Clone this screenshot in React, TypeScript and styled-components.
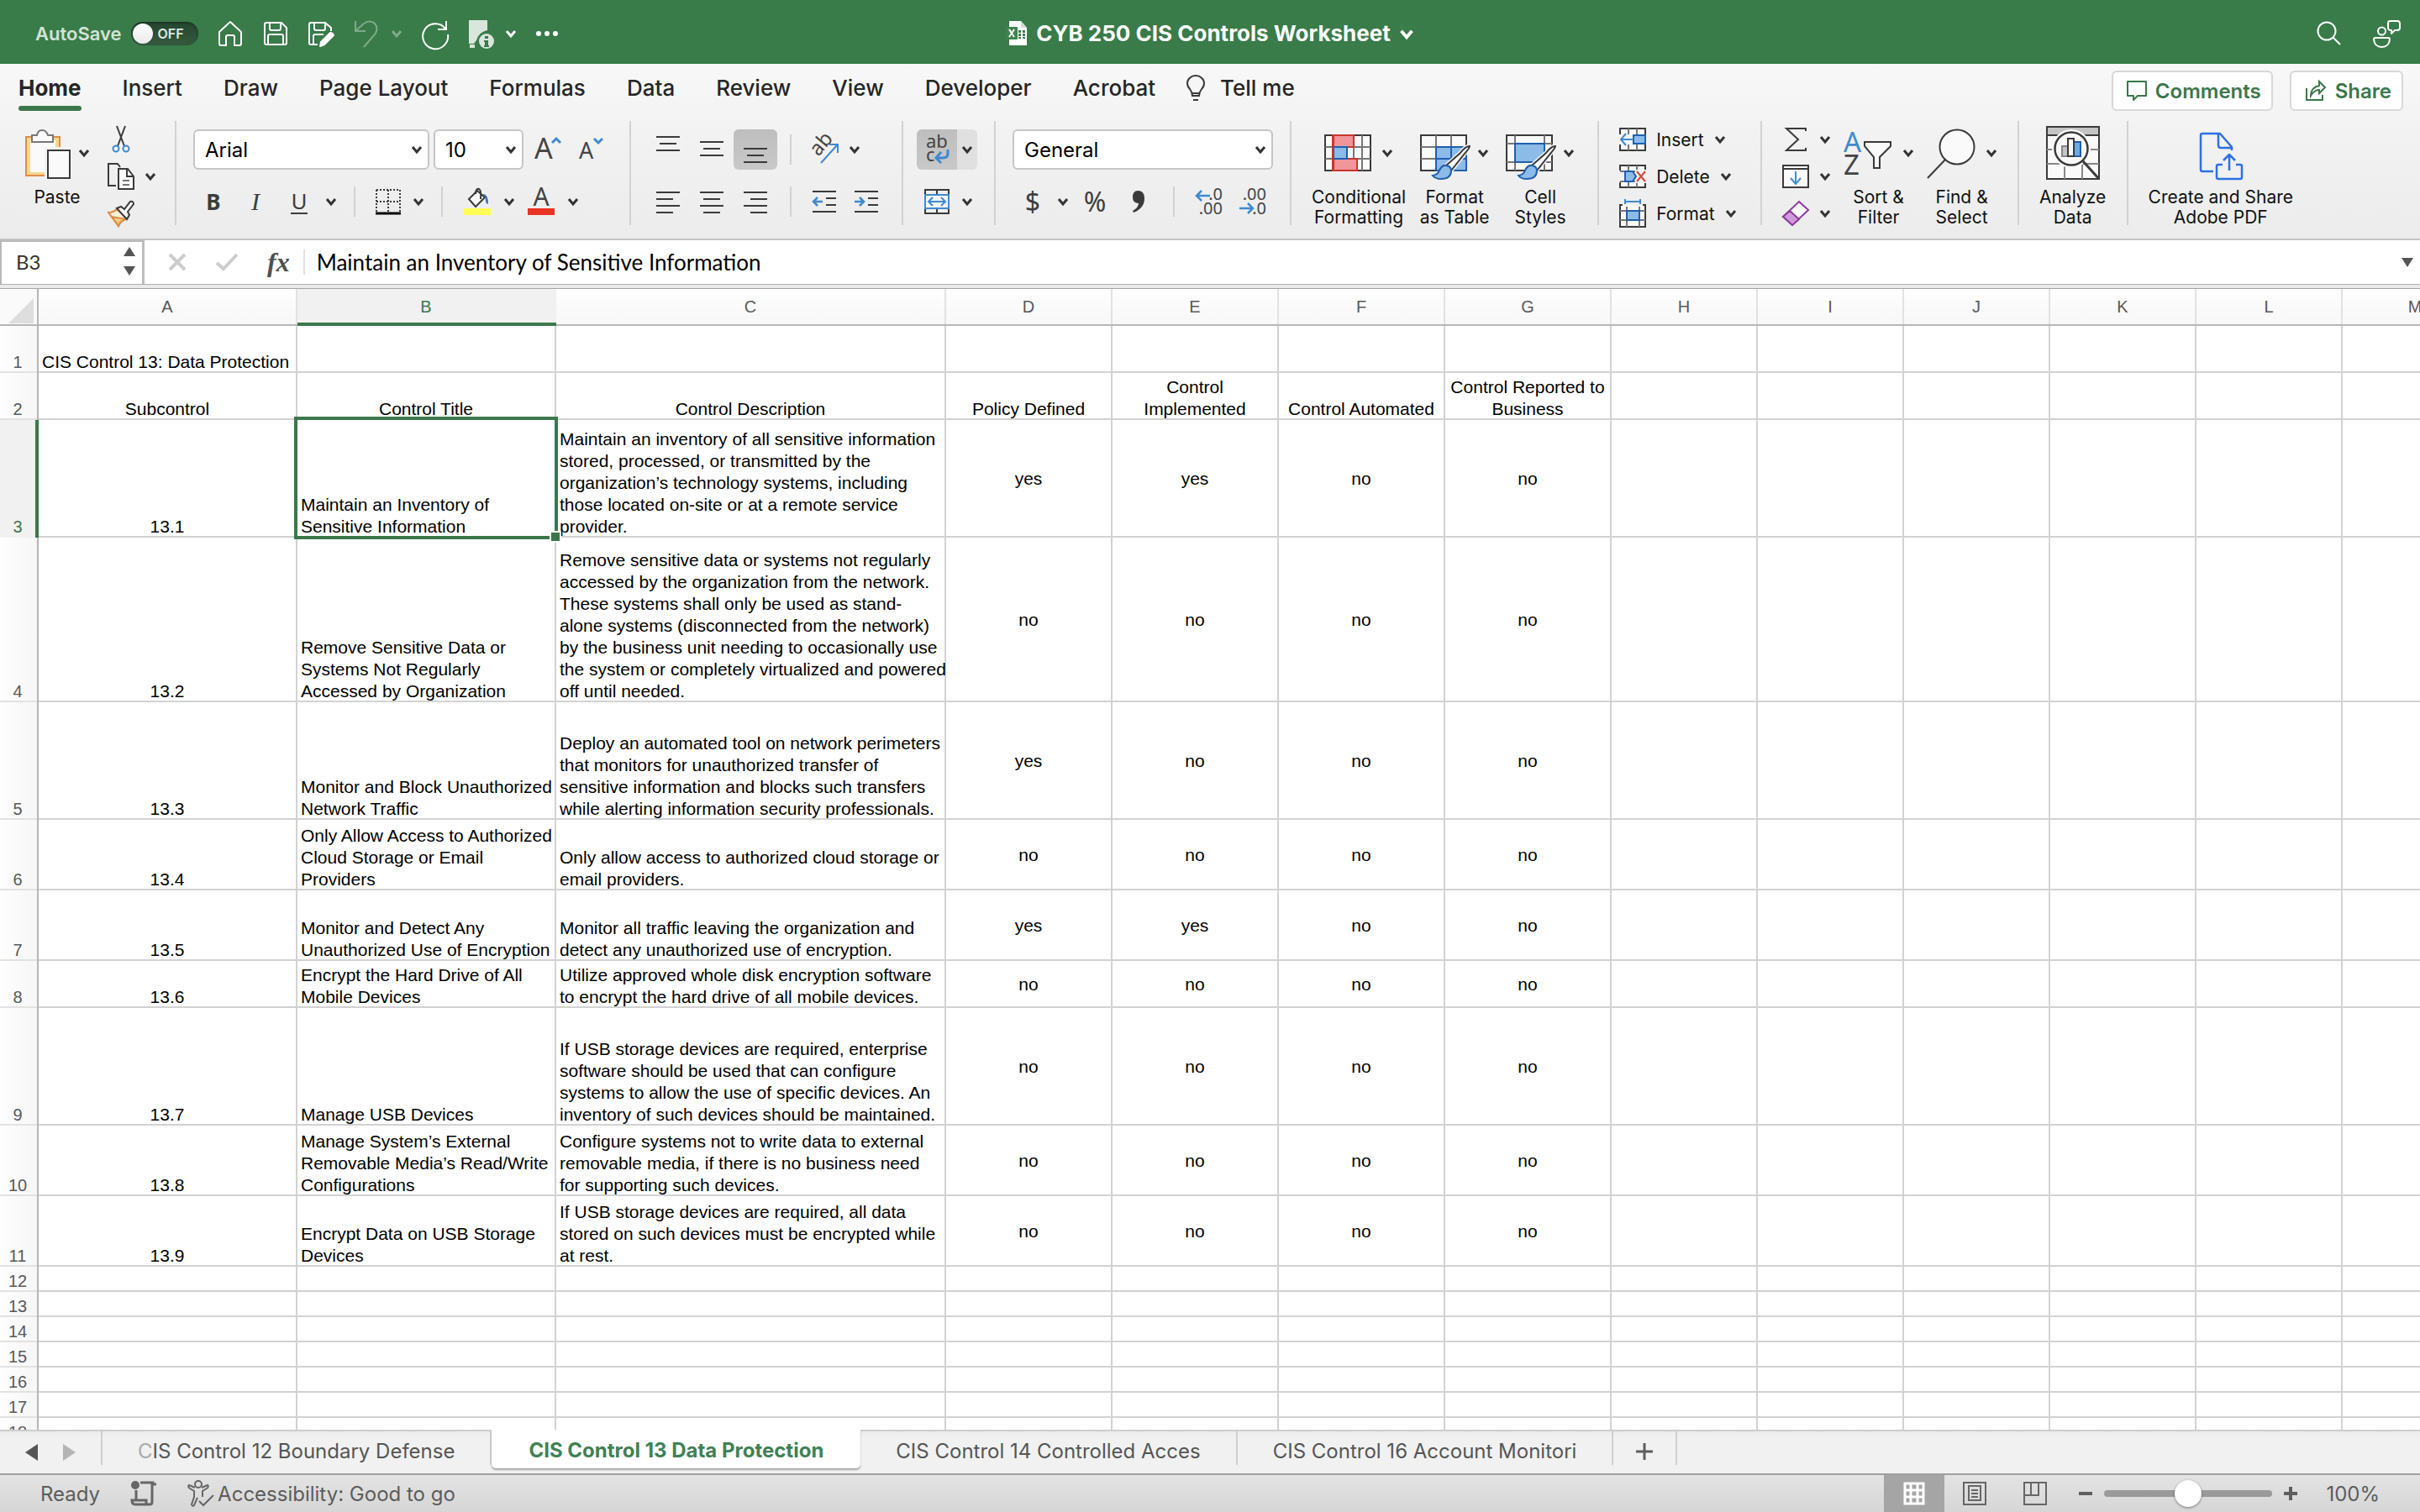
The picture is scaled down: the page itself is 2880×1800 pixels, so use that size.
import React from "react";
import styled, { createGlobalStyle, css } from "styled-components";

const UI = `Inter, "Noto Sans", sans-serif`;
const SHEET = `"Liberation Sans", Arial, sans-serif`;
const GREEN = "#3b774b";
const INK = "#3a3a3a";
const BLUE = "#3f8ad0";

const Global = createGlobalStyle`
  *, *::before, *::after { box-sizing: border-box; }
  body { margin: 0; font-family: ${UI}; background: #fff; }
  button, input, select { font: inherit; color: inherit; margin: 0; }
  svg { display: block; flex: none; overflow: visible; }
`;

/* ---------- shared parts ---------- */

const Page = styled.div`
  display: flex;
  flex-direction: column;
  height: 100vh;
  overflow: hidden;
`;

const PlainButton = styled.button`
  display: flex;
  align-items: center;
  justify-content: center;
  border: 0;
  padding: 0;
  background: none;
  cursor: pointer;
`;

const Row = styled.div<{ $gap?: number }>`
  display: flex;
  align-items: center;
  gap: ${(p) => p.$gap ?? 0}px;
`;

const Chevron = ({ color = "#333" }: { color?: string }) => (
  <svg width="14" height="10" viewBox="0 0 14 10" fill="none" stroke={color} strokeWidth="3">
    <path d="M2 2l5 6 5-6" />
  </svg>
);

/* ---------- title bar ---------- */

const TitleBar = styled.header`
  display: grid;
  grid-template-columns: 1fr auto 1fr;
  align-items: center;
  flex: none;
  height: 76px;
  padding: 4px 24px 0;
  background: #397b49;
  color: #fff;
`;

const QuickAccess = styled.div`
  display: flex;
  align-items: center;
  gap: 22px;
  padding-left: 18px;
`;

const AutoSave = styled.label`
  display: flex;
  align-items: center;
  gap: 11px;
  font-size: 22px;
  font-weight: 600;
  color: #d3e3d6;
`;

const Toggle = styled.span`
  display: grid;
  align-items: center;
  width: 80px;
  height: 28px;
  input,
  span {
    grid-area: 1 / 1;
  }
  input {
    appearance: none;
    width: 80px;
    height: 28px;
    border-radius: 14px;
    background: linear-gradient(#24452e, #35593e);
    box-shadow: inset 0 1px 3px rgba(0, 0, 0, 0.4);
  }
  input::before {
    content: "";
    display: block;
    width: 24px;
    height: 24px;
    margin: 2px;
    border-radius: 50%;
    background: linear-gradient(#fff, #eaeaea);
  }
  span {
    padding-left: 32px;
    font-size: 16px;
    line-height: 20px;
    color: #dfe8e1;
  }
`;

const BarIcon = styled(PlainButton)<{ $w?: number }>`
  width: ${(p) => p.$w ?? 32}px;
  height: 36px;
`;

const DocTitle = styled(PlainButton)`
  gap: 10px;
  font-size: 26px;
  line-height: 32px;
  font-weight: 700;
  color: #fff;
  svg:last-child {
    width: 18px;
    height: 13px;
  }
`;

const TitleActions = styled.div`
  display: flex;
  justify-content: flex-end;
  gap: 36px;
`;

const stroke = { fill: "none", stroke: "#fff", strokeWidth: 2 } as const;

const HomeIcon = () => (
  <svg width="32" height="32" viewBox="0 0 32 32" {...stroke} strokeLinejoin="round">
    <path d="M3 14L16 2l13 12v14q0 2-2 2h-6V20q0-2-2-2h-6q-2 0-2 2v10H5q-2 0-2-2z" />
  </svg>
);
const SaveIcon = () => (
  <svg width="32" height="32" viewBox="0 0 32 32" {...stroke} strokeLinejoin="round">
    <path d="M5 3h18l6 6v18q0 2-2 2H5q-2 0-2-2V5q0-2 2-2zM9 3v7q0 2 2 2h9q2 0 2-2V3M7 29V19q0-2 2-2h14q2 0 2 2v10" />
  </svg>
);
const SaveEditIcon = () => (
  <svg width="32" height="32" viewBox="0 0 32 32" {...stroke} strokeLinejoin="round">
    <path d="M12 29H4q-2 0-2-2V5q0-2 2-2h17l7 6v4M8 3v7q0 2 2 2h9q2 0 2-2V3M7 29V19q0-2 2-2h10" />
    <path d="M16 26l11-11q3 0 4 3L20 29l-5 2z" fill="#fff" />
  </svg>
);
const UndoIcon = () => (
  <svg width="32" height="34" viewBox="0 0 32 34" fill="none" stroke="#7fab88" strokeWidth="2">
    <path d="M3 2v12h12M4 13L13 5q7-5 13 0 5 6 0 13L13 33" />
  </svg>
);
const RedoIcon = () => (
  <svg width="34" height="34" viewBox="0 0 34 34" {...stroke}>
    <path d="M30 2v10H20M29 11A15 15 0 1 0 32 18" />
  </svg>
);
const DocInfoIcon = () => (
  <svg width="32" height="36" viewBox="0 0 32 36" fill="#d9e6dc">
    <path d="M2 2h22v12q-10 2-13 12l-3 4H2zM3 31h6v4H3z" />
    <circle cx="23" cy="27" r="9" />
    <path d="M21 21h4v3h-4zM20 26h5v6h1v2h-6v-2h1v-4h-1z" fill="#397b49" />
  </svg>
);
const DotsIcon = () => (
  <svg width="26" height="8" viewBox="0 0 26 8" fill="#fff">
    <circle cx="3" cy="4" r="3" />
    <circle cx="13" cy="4" r="3" />
    <circle cx="23" cy="4" r="3" />
  </svg>
);
const WorkbookIcon = () => (
  <svg width="26" height="32" viewBox="0 0 26 32">
    <path d="M4 1h14l7 8v21H4z" fill="#fff" />
    <path d="M18 1v8h7z" fill="#cfdcd2" />
    <path d="M15 12h3v3h-3zM20 12h3v3h-3zM15 16h3v3h-3zM20 16h3v3h-3zM15 20h3v2h-3zM20 20h3v2h-3z" fill="#397b49" />
    <rect x="0" y="8" width="14" height="15" rx="1" fill="#3f8350" />
    <path d="M4 11l6 9M10 11l-6 9" stroke="#fff" strokeWidth="2" />
  </svg>
);
const SearchIcon = () => (
  <svg width="32" height="32" viewBox="0 0 32 32" {...stroke}>
    <circle cx="13" cy="13" r="10.5" />
    <path d="M20 20l9 9" />
  </svg>
);
const PeopleIcon = () => (
  <svg width="34" height="34" viewBox="0 0 34 34" {...stroke} strokeLinejoin="round">
    <circle cx="11.500" cy="14" r="4.500" />
    <path d="M2 24q0-2 2-2h15q2 0 2 2-1 9-9.500 9T2 24zM21 2h9q3 0 3 3v5q0 3-3 3h-3l-4 4v-4q-4 0-4-3V5q0-3 2-3z" />
  </svg>
);

/* ---------- ribbon ---------- */

const Ribbon = styled.section`
  flex: none;
  background: linear-gradient(#f8f8f8, #f2f2f2 40%, #ececec);
  border-bottom: 2px solid #c4c4c4;
`;

const TabStrip = styled.nav`
  display: flex;
  align-items: flex-start;
  height: 68px;
  padding: 8px 20px 0 22px;
  gap: 49px;
`;

const RibbonTab = styled(PlainButton)<{ $active?: boolean }>`
  flex-direction: column;
  height: 48px;
  padding-top: 6px;
  justify-content: space-between;
  align-items: stretch;
  font-size: 26px;
  line-height: 30px;
  font-weight: ${(p) => (p.$active ? 700 : 500)};
  color: #262626;
  &::after {
    content: "";
    height: 6px;
    border-radius: 3px;
    background: ${(p) => (p.$active ? GREEN : "transparent")};
  }
`;

const TellMe = styled(PlainButton)`
  gap: 18px;
  height: 42px;
  margin-left: -12px;
  font-size: 26px;
  line-height: 30px;
  font-weight: 500;
  color: #262626;
`;

const TabActions = styled.div`
  display: flex;
  gap: 20px;
  margin-left: auto;
`;

const ActionButton = styled.button`
  display: flex;
  align-items: center;
  gap: 10px;
  height: 48px;
  padding: 0 12px 0 16px;
  border: 2px solid #d8d8d8;
  border-radius: 6px;
  background: #fff;
  color: ${GREEN};
  font-size: 24px;
  font-weight: 600;
`;

const Toolbar = styled.div`
  display: flex;
  align-items: flex-start;
  height: 140px;
`;

const Group = styled.div<{ $pl?: number; $pr?: number; $gap?: number }>`
  display: flex;
  gap: ${(p) => p.$gap ?? 14}px;
  height: 128px;
  padding: 0 ${(p) => p.$pr ?? 18}px 0 ${(p) => p.$pl ?? 18}px;
`;

const Rule = styled.div`
  flex: none;
  width: 2px;
  height: 124px;
  background: #d2d2d2;
`;

const TwoRows = styled.div`
  display: grid;
  grid-template-rows: 48px 48px;
  align-content: start;
  gap: 14px;
  padding-top: 10px;
`;

const ThreeRows = styled.div`
  display: grid;
  grid-template-rows: repeat(3, 44px);
  align-content: start;
  justify-items: start;
`;

const Tool = styled(PlainButton)<{ $w?: number; $bg?: string; $radius?: string }>`
  flex: none;
  width: ${(p) => p.$w ?? 52}px;
  height: 48px;
  background: ${(p) => p.$bg ?? "none"};
  border-radius: ${(p) => p.$radius ?? "0"};
`;

const MiniRule = styled.div<{ $w?: number }>`
  flex: none;
  width: ${(p) => p.$w ?? 32}px;
  display: flex;
  justify-content: center;
  &::before {
    content: "";
    width: 2px;
    height: 36px;
    background: #d2d2d2;
  }
`;

const SelectBox = styled.div<{ $w: number }>`
  display: grid;
  align-items: center;
  width: ${(p) => p.$w}px;
  height: 48px;
  select {
    grid-area: 1 / 1;
    width: 100%;
    height: 48px;
    appearance: none;
    padding: 0 30px 0 12px;
    border: 2px solid #c6c6c6;
    border-radius: 6px;
    background: #fff;
    color: #000;
    font-size: 24px;
  }
  svg {
    grid-area: 1 / 1;
    justify-self: end;
    margin-right: 8px;
    pointer-events: none;
  }
`;

const Big = styled.button<{ $w?: number }>`
  display: flex;
  flex-direction: column;
  align-items: center;
  min-width: ${(p) => p.$w ?? 88}px;
  padding: 6px 0 0;
  border: 0;
  background: none;
  color: #111;
  font-size: 21px;
  line-height: 24px;
  text-align: center;
  white-space: pre;
`;

const BigIcon = styled.span<{ $gap?: number }>`
  display: flex;
  align-items: center;
  gap: ${(p) => p.$gap ?? 8}px;
  height: 64px;
  margin-bottom: 9px;
`;

const Small = styled(PlainButton)`
  gap: 12px;
  height: 44px;
  font-size: 21px;
  color: #111;
`;

const glyph = { fontFamily: `"Noto Sans", sans-serif`, fill: "#444" } as const;

type Bar = [number, number];
const Bars = ({ rows, top = 0 }: { rows: Bar[]; top?: number }) => (
  <svg width="28" height="32" viewBox="0 0 28 32" fill={INK}>
    {rows.map(([x, w], i) => (
      <rect key={i} x={x} y={top + i * 8} width={w} height="2" />
    ))}
  </svg>
);
const three: Bar[] = [[0, 28], [4, 20], [0, 28]];

const IndentIcon = ({ inward }: { inward?: boolean }) => (
  <svg width="28" height="28" viewBox="0 0 28 28" fill={INK}>
    <path d="M0 1h28v2H0zM16 9h12v2H16zM16 17h12v2H16zM0 25h28v2H0z" />
    <path
      d={inward ? "M0 14h10M6 9l5 5-5 5" : "M12 14H2M6 9l-5 5 5 5"}
      fill="none"
      stroke={BLUE}
      strokeWidth="2.500"
    />
  </svg>
);

const Brush = () => (
  <g>
    <path d="M59 24q-5 0-11 8L31 47l6 6 16-20q6-7 6-9z" fill="#fff" stroke="#f5f5f5" strokeWidth="5" />
    <path d="M59 24q-5 0-11 8L31 47l6 6 16-20q6-7 6-9z" fill="#fff" stroke={INK} strokeWidth="2" />
    <path d="M37 53q0 10-12 10-7 0-10-4 6-1 8-6 3-7 8-6 6 1 6 6z" fill="#8dbbe8" stroke="#1f5fae" strokeWidth="2" />
  </g>
);

const PasteIcon = () => (
  <svg width="56" height="64" viewBox="0 0 56 64">
    <path d="M2 13h40v46H2z" fill="#f5d88f" stroke="#e28b45" strokeWidth="2" />
    <path d="M7 17h30v38H7z" fill="#fafafa" />
    <path d="M9 19v-8h6q1-6 6-6t7 6h6v8z" fill="#fafafa" stroke="#777" strokeWidth="2" />
    <path d="M24 25h32v39H24z" fill="#f3f3f3" />
    <path d="M28 29h26v33H28z" fill="#fafafa" stroke={INK} strokeWidth="2" />
  </svg>
);
const CutIcon = () => (
  <svg width="32" height="34" viewBox="0 0 32 34" fill="none">
    <path d="M11 1l9 24M21 1l-9 24" stroke={INK} strokeWidth="2" />
    <circle cx="10" cy="28" r="3.500" stroke={BLUE} strokeWidth="2" />
    <circle cx="22" cy="28" r="3.500" stroke={BLUE} strokeWidth="2" />
  </svg>
);
const CopyIcon = () => (
  <svg width="32" height="34" viewBox="0 0 32 34" fill="none" stroke={INK} strokeWidth="2">
    <path d="M10 28H1V2h11l3 4" />
    <path d="M13 8h11l7 9v15H13z" fill="#fafafa" />
    <path d="M23 8v9h8" />
    <path d="M18 22h8M18 27h8" stroke="#777" />
  </svg>
);
const PainterIcon = () => (
  <svg width="32" height="32" viewBox="0 0 32 32">
    <path d="M1 15q6 0 10-4l12 11q-7 2-10 9z" fill="#fdf0d8" stroke="#e28b45" strokeWidth="2" />
    <path d="M5 20l17 3q-7 2-9 8z" fill="#f5cf7f" stroke="#e28b45" strokeWidth="2" />
    <path d="M11 10l5-2 4 3 7-9q4-1 4 3l-7 9 2 4-3 5z" fill="#fafafa" stroke={INK} strokeWidth="2" />
  </svg>
);
const BordersIcon = () => (
  <svg width="32" height="32" viewBox="0 0 32 32" fill="none" stroke={INK} strokeWidth="2">
    <path d="M2 2h28M2 16h28M2 2v26M16 2v26M30 2v26" strokeDasharray="2 2" />
    <path d="M1 30h30" stroke="#000" strokeWidth="3" />
  </svg>
);
const FillIcon = () => (
  <svg width="32" height="34" viewBox="0 0 32 34">
    <path d="M6 14L16 4l9 8-11 11z" fill="#fafafa" stroke={INK} strokeWidth="2" />
    <path d="M14 8q0-7 4-6 3 1 2 12" fill="none" stroke={INK} strokeWidth="2" />
    <path d="M22 8q7-1 7 12-4-1-3-8z" fill="#2d6fc0" />
    <path d="M0 25h32v8H0z" fill="#fffe54" />
  </svg>
);
const FontColorIcon = () => (
  <svg width="32" height="34" viewBox="0 0 32 34">
    <text x="16" y="22" fontSize="30" textAnchor="middle" {...glyph}>A</text>
    <path d="M0 25h32v8H0z" fill="#e93323" />
  </svg>
);
const SizeIcon = ({ down }: { down?: boolean }) => (
  <svg width="32" height="36" viewBox="0 0 32 36">
    <text x="0" y="29" fontSize={down ? 27 : 34} {...glyph}>A</text>
    <path
      d={down ? "M18 5l5 5 5-5" : "M21 10l5-5 5 5"}
      fill="none"
      stroke={BLUE}
      strokeWidth="3"
    />
  </svg>
);
const OrientIcon = () => (
  <svg width="34" height="34" viewBox="0 0 34 34">
    <text x="0" y="0" fontSize="24" transform="translate(10 26) rotate(-50)" {...glyph}>ab</text>
    <path d="M13 33L32 12M23 11h10v10" fill="none" stroke={BLUE} strokeWidth="2" />
  </svg>
);
const WrapIcon = () => (
  <svg width="30" height="36" viewBox="0 0 30 36">
    <text x="2" y="16" fontSize="22" {...glyph}>ab</text>
    <text x="2" y="32" fontSize="22" {...glyph}>c</text>
    <path d="M28 18v5q0 5-6 5h-7M20 21l-6 7 6 6" fill="none" stroke={BLUE} strokeWidth="3" />
  </svg>
);
const MergeIcon = () => (
  <svg width="32" height="32" viewBox="0 0 32 32" fill="none" stroke={INK} strokeWidth="2">
    <path d="M2 2h28v28H2zM16 2v6M16 24v6" />
    <path d="M2 8h28v16H2z" fill="#f3f8fd" stroke={BLUE} />
    <path d="M7 16h18M11 11l-5 5 5 5M21 11l5 5-5 5" stroke={BLUE} />
  </svg>
);
const DecimalIcon = ({ more }: { more?: boolean }) => (
  <svg width="34" height="34" viewBox="0 0 34 34">
    <text x="33" y="15" fontSize="20" textAnchor="end" {...glyph}>{more ? ".0" : ".00"}</text>
    <text x="33" y="32" fontSize="20" textAnchor="end" {...glyph}>{more ? ".00" : ".0"}</text>
    <path
      d={more ? "M18 10H2M8 4l-6 6 6 6" : "M1 25h16M11 19l6 6-6 6"}
      fill="none"
      stroke={BLUE}
      strokeWidth="2.500"
    />
  </svg>
);
const ConditionalIcon = () => (
  <svg width="60" height="64" viewBox="0 0 60 64" strokeWidth="2">
    <path d="M1 11h54v42H1z" fill="#fafafa" stroke={INK} />
    <path d="M1 25h54M1 39h54M35 11v42M45 11v42" stroke="#777" />
    <path d="M11 11h24v14H11zM11 39h28v14H11z" fill="#f0959a" stroke="#c8372b" />
    <path d="M11 25h16v14H11z" fill="#8dbbe8" stroke="#1f5fae" />
    <path d="M10 10v44" stroke="#c8372b" />
  </svg>
);
const FormatTableIcon = () => (
  <svg width="60" height="64" viewBox="0 0 60 64" strokeWidth="2">
    <path d="M1 11h54v42H1z" fill="#fafafa" stroke={INK} />
    <path d="M1 25h54M1 39h54M19 11v42M37 11v42" stroke="#777" />
    <path d="M19 25h36v28H19zM19 39h36M37 25v28" fill="#8dbbe8" stroke="#1f5fae" />
    <Brush />
  </svg>
);
const CellStylesIcon = () => (
  <svg width="60" height="64" viewBox="0 0 60 64" strokeWidth="2">
    <path d="M1 11h54v42H1z" fill="#fafafa" stroke={INK} />
    <path d="M1 21h54M1 43h54M11 11v42M46 11v42" stroke="#777" />
    <path d="M11 21h35v22H11z" fill="#8dbbe8" stroke="#1f5fae" />
    <Brush />
  </svg>
);
const InsertIcon = () => (
  <svg width="32" height="28" viewBox="0 0 32 28" strokeWidth="2">
    <path d="M1 1h30v26H1z" fill="#fafafa" stroke={INK} />
    <path d="M11 1v26M21 1v26M1 9h30M1 19h30" stroke="#777" />
    <path d="M17 9h14v10H17z" fill="#8dbbe8" stroke="#1f5fae" />
    <path d="M0 8h16v12H0z" fill="#f5f5f5" />
    <path d="M17 14H2M8 7l-6 7 6 7" fill="none" stroke={BLUE} />
  </svg>
);
const DeleteIcon = () => (
  <svg width="32" height="28" viewBox="0 0 32 28" strokeWidth="2">
    <path d="M1 7V1h30v26H1v-6" fill="#fafafa" stroke={INK} />
    <path d="M11 1v26M21 1v26M1 8h30M1 20h30" stroke="#777" />
    <path d="M0 9h5v10H0zM19 6h13v16H19z" fill="#f3f3f3" />
    <path d="M7 8h9l4 6-4 6H7z" fill="#8dbbe8" stroke="#1f5fae" />
    <path d="M21 8l10 12M31 8L21 20" fill="none" stroke="#d9443a" />
  </svg>
);
const FormatIcon = () => (
  <svg width="32" height="34" viewBox="0 0 32 34" strokeWidth="2" fill="none">
    <path d="M4 7H1v26h30V7h-3" fill="#fafafa" stroke={INK} />
    <path d="M9 9v24M24 9v24M1 14h30M1 25h30" stroke="#777" />
    <path d="M9 14h15v11H9z" fill="#8dbbe8" stroke="#1f5fae" />
    <path d="M7 3h18M7 0v6M25 0v6" stroke={BLUE} />
  </svg>
);
const SumIcon = () => (
  <svg width="32" height="30" viewBox="0 0 32 30" fill="none" stroke={INK} strokeWidth="2">
    <path d="M28 5V2H5l14 13L5 28h23v-3" />
  </svg>
);
const FillDownIcon = () => (
  <svg width="32" height="28" viewBox="0 0 32 28" fill="#fafafa" stroke={INK} strokeWidth="2">
    <path d="M1 1h30v26H1zM1 5h30" />
    <path d="M16 8v14M10 16l6 7 6-7" fill="none" stroke={BLUE} />
  </svg>
);
const ClearIcon = () => (
  <svg width="32" height="32" viewBox="0 0 32 32" stroke="#8e3a9d" strokeWidth="2">
    <path d="M20 2l11 10-19 18L1 20z" fill="#fafafa" />
    <path d="M9 13l11 10-8 7L1 20z" fill="#cf9bd8" />
  </svg>
);
const SortIcon = () => (
  <svg width="58" height="64" viewBox="0 0 58 64">
    <text x="0" y="31" fontSize="33" {...glyph} fill={BLUE}>A</text>
    <text x="0" y="58" fontSize="33" {...glyph}>Z</text>
    <path d="M25 19h31v5L43 37v13h-7V37L25 24z" fill="#fafafa" stroke={INK} strokeWidth="2" />
  </svg>
);
const FindIcon = () => (
  <svg width="58" height="64" viewBox="0 0 58 64" fill="#fafafa" stroke={INK} strokeWidth="2">
    <circle cx="36" cy="25" r="20.500" />
    <path d="M22 40L1 62" />
  </svg>
);
const AnalyzeIcon = () => (
  <svg width="64" height="64" viewBox="0 0 64 64" strokeWidth="2">
    <path d="M1 1h62v62H1z" fill="#fafafa" stroke={INK} strokeWidth="2" />
    <path d="M2 2h60v8H2z" fill="#c4c4c4" />
    <path d="M1 11h62" stroke={INK} />
    <path d="M1 28h62M1 45h62M22 45v18M43 45v18" stroke="#888" />
    <circle cx="30" cy="27" r="23" fill="#fafafa" />
    <circle cx="30" cy="27" r="19.500" fill="#fafafa" stroke={INK} strokeWidth="2.500" />
    <path d="M19 24h7v12h-7z" fill="#c4c4c4" stroke="#888" />
    <path d="M33 19h8v17h-8z" fill="#6fa8e0" stroke="#1f5fae" />
    <path d="M26 15h7v21h-7z" fill="#fff" stroke={INK} />
    <path d="M44 42l19 21" stroke={INK} strokeWidth="3" />
  </svg>
);
const PdfIcon = () => (
  <svg width="52" height="64" viewBox="0 0 52 64" fill="none" stroke="#2f6fe4" strokeWidth="2.500" strokeLinejoin="round">
    <path d="M17 54H4q-2 0-2-2V11q0-2 2-2h21l14 16v4M23 10v13q0 3 3 3h12" />
    <path d="M28 46h-5q-2 0-2 2v13q0 2 2 2h26q2 0 2-2V48q0-2-2-2h-5M36 53V35M29 41l7-7 7 7" />
  </svg>
);
const BulbIcon = () => (
  <svg width="22" height="32" viewBox="0 0 22 32" fill="none" stroke={INK} strokeWidth="2">
    <path d="M7 25q0-4-3-8-3-3-3-7a10 9 0 0 1 20 0q0 4-3 7-3 4-3 8zM7 22h8M8 30h6" />
  </svg>
);
const CommentIcon = () => (
  <svg width="24" height="26" viewBox="0 0 24 26" fill="none" stroke={GREEN} strokeWidth="2">
    <path d="M1 2h22v17H13l-5 5v-5H1z" strokeLinejoin="round" />
  </svg>
);
const ShareIcon = () => (
  <svg width="26" height="26" viewBox="0 0 26 26" fill="none" stroke={GREEN} strokeWidth="2">
    <path d="M2 10v14h19v-6M7 19q0-10 10-12V2l7 7-7 7v-4q-6 0-10 7z" />
  </svg>
);

const Mark = styled.span<{ $kind?: "b" | "i" | "u" | "sym" }>`
  font-family: "Noto Sans", sans-serif;
  font-size: 26px;
  line-height: 32px;
  color: #3d3d3d;
  ${(p) => p.$kind === "b" && css`font-weight: 700;`}
  ${(p) => p.$kind === "i" && css`font-family: "Liberation Serif", serif; font-style: italic; font-size: 30px;`}
  ${(p) => p.$kind === "u" && css`border-bottom: 2px solid #3d3d3d; line-height: 28px;`}
  ${(p) => p.$kind === "sym" && css`font-size: 32px;`}
`;

/* ---------- formula bar ---------- */

const FormulaBar = styled.div`
  display: flex;
  align-items: stretch;
  flex: none;
  height: 58px;
  background: #fff;
  border-bottom: 1px solid #a4a4a4;
  box-shadow: inset 0 -4px 0 #e9e9e9, inset 0 -5px 0 #b0b0b0;
  padding-bottom: 5px;
  font-family: Lato, "Open Sans", sans-serif;
  font-size: 26px;
`;

const NameBox = styled.div`
  display: flex;
  align-items: center;
  width: 172px;
  border: 2px solid #b9b9b9;
  border-bottom: 0;
  border-right: 3px solid #bdbdbd;
  padding: 0 8px 4px 17px;
  input {
    flex: 1;
    min-width: 0;
    border: 0;
    padding: 0;
    background: none;
    color: #333;
    font-size: 24px;
  }
`;

const Stepper = styled.div`
  display: flex;
  flex-direction: column;
  gap: 12px;
`;

const FormulaActions = styled.div`
  display: flex;
  align-items: center;
  gap: 34px;
  padding: 0 16px 0 28px;
`;

const Fx = styled.span`
  font-family: "Liberation Serif", serif;
  font-style: italic;
  font-weight: 700;
  font-size: 32px;
  line-height: 36px;
  color: #505050;
`;

const FormulaInput = styled.input`
  flex: 1;
  align-self: center;
  height: 30px;
  min-width: 0;
  border: 0;
  border-left: 2px solid #e2e2e2;
  padding: 0 0 0 14px;
  background: none;
  color: #000;
`;

const Expand = styled(PlainButton)`
  width: 30px;
`;

const Triangle = ({ up, color = "#555" }: { up?: boolean; color?: string }) => (
  <svg width="14" height="11" viewBox="0 0 14 11" fill={color}>
    <path d={up ? "M7 0l7 11H0z" : "M7 11L0 0h14z"} />
  </svg>
);

/* ---------- sheet ---------- */

const SheetArea = styled.main`
  flex: 1;
  min-height: 0;
  overflow: hidden;
`;

const Grid = styled.table`
  table-layout: fixed;
  width: 2962px;
  border-spacing: 0;
  font-family: ${SHEET};
  font-size: 21px;
  line-height: 26px;
  color: #000;
`;

const Corner = styled.td`
  height: 44px;
  padding: 8px 4px 0 10px;
  background: #fafafa;
  box-shadow: inset -2px -2px 0 #b6b6b6;
`;

const ColHead = styled.th<{ $on?: boolean }>`
  height: 44px;
  padding: 0 2px 2px 0;
  font-size: 20px;
  font-weight: 400;
  color: ${(p) => (p.$on ? GREEN : "#595959")};
  background: ${(p) => (p.$on ? "#f1f1f1" : "linear-gradient(#fefefe, #f7f7f7)")};
  box-shadow: ${(p) =>
    p.$on ? `inset 0 -4px 0 ${GREEN}` : "inset 0 -2px 0 #b6b6b6, inset -2px 0 0 #e2e2e2"};
`;

const RowHead = styled.th<{ $on?: boolean }>`
  padding: 0 4px 0 0;
  vertical-align: bottom;
  font-size: 20px;
  font-weight: 400;
  color: ${(p) => (p.$on ? GREEN : "#595959")};
  background: ${(p) => (p.$on ? "#f1f1f1" : "linear-gradient(90deg, #fefefe, #f6f6f6)")};
  box-shadow: ${(p) =>
    p.$on ? `inset -4px 0 0 ${GREEN}` : "inset -2px 0 0 #b6b6b6, inset 0 -2px 0 #e2e2e2"};
`;

const Line = styled.tr<{ $h: number }>`
  height: ${(p) => p.$h}px;
`;

const Cell = styled.td<{ $align?: string; $middle?: boolean }>`
  position: relative;
  padding: 0 6px 0 4px;
  text-align: ${(p) => p.$align ?? "left"};
  vertical-align: ${(p) => (p.$middle ? "middle" : "bottom")};
  white-space: pre;
  box-shadow: inset -2px -2px 0 #d2d2d2;
`;

const Selection = styled.div`
  position: absolute;
  inset: -4px -2px -2px -4px;
  z-index: 1;
  border: 4px solid ${GREEN};
  pointer-events: none;
  &::after {
    content: "";
    position: absolute;
    right: -8px;
    bottom: -8px;
    width: 14px;
    height: 14px;
    border: 2px solid #fff;
    background: ${GREEN};
  }
`;

const COLS: [string, number][] = [
  ["A", 308], ["B", 308], ["C", 464], ["D", 198], ["E", 198], ["F", 198], ["G", 198],
  ["H", 174], ["I", 174], ["J", 174], ["K", 174], ["L", 174], ["M", 174],
];

const ROWS: { h: number; cells: string[] }[] = [
  { h: 56, cells: ["CIS Control 13: Data Protection"] },
  {
    h: 56,
    cells: [
      "Subcontrol", "Control Title", "Control Description", "Policy Defined",
      "Control\nImplemented", "Control Automated", "Control Reported to\nBusiness",
    ],
  },
  {
    h: 140,
    cells: [
      "13.1", "Maintain an Inventory of\nSensitive Information",
      "Maintain an inventory of all sensitive information\nstored, processed, or transmitted by the\norganization’s technology systems, including\nthose located on-site or at a remote service\nprovider.",
      "yes", "yes", "no", "no",
    ],
  },
  {
    h: 196,
    cells: [
      "13.2", "Remove Sensitive Data or\nSystems Not Regularly\nAccessed by Organization",
      "Remove sensitive data or systems not regularly\naccessed by the organization from the network.\nThese systems shall only be used as stand-\nalone systems (disconnected from the network)\nby the business unit needing to occasionally use\nthe system or completely virtualized and powered\noff until needed.",
      "no", "no", "no", "no",
    ],
  },
  {
    h: 140,
    cells: [
      "13.3", "Monitor and Block Unauthorized\nNetwork Traffic",
      "Deploy an automated tool on network perimeters\nthat monitors for unauthorized transfer of\nsensitive information and blocks such transfers\nwhile alerting information security professionals.",
      "yes", "no", "no", "no",
    ],
  },
  {
    h: 84,
    cells: [
      "13.4", "Only Allow Access to Authorized\nCloud Storage or Email\nProviders",
      "Only allow access to authorized cloud storage or\nemail providers.",
      "no", "no", "no", "no",
    ],
  },
  {
    h: 84,
    cells: [
      "13.5", "Monitor and Detect Any\nUnauthorized Use of Encryption",
      "Monitor all traffic leaving the organization and\ndetect any unauthorized use of encryption.",
      "yes", "yes", "no", "no",
    ],
  },
  {
    h: 56,
    cells: [
      "13.6", "Encrypt the Hard Drive of All\nMobile Devices",
      "Utilize approved whole disk encryption software\nto encrypt the hard drive of all mobile devices.",
      "no", "no", "no", "no",
    ],
  },
  {
    h: 140,
    cells: [
      "13.7", "Manage USB Devices",
      "If USB storage devices are required, enterprise\nsoftware should be used that can configure\nsystems to allow the use of specific devices. An\ninventory of such devices should be maintained.",
      "no", "no", "no", "no",
    ],
  },
  {
    h: 84,
    cells: [
      "13.8", "Manage System’s External\nRemovable Media’s Read/Write\nConfigurations",
      "Configure systems not to write data to external\nremovable media, if there is no business need\nfor supporting such devices.",
      "no", "no", "no", "no",
    ],
  },
  {
    h: 84,
    cells: [
      "13.9", "Encrypt Data on USB Storage\nDevices",
      "If USB storage devices are required, all data\nstored on such devices must be encrypted while\nat rest.",
      "no", "no", "no", "no",
    ],
  },
  ...Array.from({ length: 7 }, () => ({ h: 30, cells: [] as string[] })),
];

const alignOf = (row: number, col: number) => {
  if (row === 0) return "left";
  if (row === 1) return "center";
  return col === 1 || col === 2 ? "left" : "center";
};

const Sheet = () => (
  <SheetArea>
    <Grid>
      <colgroup>
        <col width={46} />
        {COLS.map(([name, w]) => (
          <col key={name} width={w} />
        ))}
      </colgroup>
      <thead>
        <tr>
          <Corner>
            <svg width="30" height="30" viewBox="0 0 30 30" fill="#dedede">
              <path d="M30 0v30H0z" />
            </svg>
          </Corner>
          {COLS.map(([name]) => (
            <ColHead key={name} scope="col" $on={name === "B"}>{name}</ColHead>
          ))}
        </tr>
      </thead>
      <tbody>
        {ROWS.map((row, r) => (
          <Line key={r} $h={row.h}>
            <RowHead scope="row" $on={r === 2}>{r + 1}</RowHead>
            {COLS.map(([name], c) => (
              <Cell key={name} $align={alignOf(r, c)} $middle={r > 1 && c > 2}>
                {row.cells[c]}
                {r === 2 && c === 1 && <Selection />}
              </Cell>
            ))}
          </Line>
        ))}
      </tbody>
    </Grid>
  </SheetArea>
);

/* ---------- sheet tabs ---------- */

const SheetTabs = styled.nav`
  display: flex;
  align-items: flex-start;
  flex: none;
  height: 54px;
  border-top: 2px solid #cdcdcd;
  border-bottom: 2px solid #a0a0a0;
  background: linear-gradient(#ececec, #f1f1f1 8px);
`;

const TabArrows = styled.div`
  display: flex;
  align-items: center;
  gap: 30px;
  height: 40px;
  padding: 10px 30px 0;
  border-right: 2px solid #cfcfcf;
`;

const SheetTab = styled.button<{ $active?: boolean }>`
  height: 40px;
  padding: 8px 42px 0;
  border: 0;
  border-right: 2px solid #cfcfcf;
  background: none;
  font-size: 24px;
  line-height: 32px;
  font-weight: 400;
  color: #555;
  ${(p) =>
    p.$active &&
    css`
      height: 46px;
      margin-top: -2px;
      padding: 4px 44px 0;
      border: 0;
      border-radius: 0 0 5px 5px;
      background: #fff;
      color: #3f8153;
      font-weight: 700;
      box-shadow: 0 2px 2px #a5a5a5;
    `}
`;

const Faded = styled.span`
  color: #aaa;
`;

const AddTab = styled(SheetTab)`
  padding: 8px 27px 0;
`;

/* ---------- status bar ---------- */

const StatusBar = styled.footer`
  display: flex;
  align-items: center;
  flex: none;
  height: 44px;
  padding: 0 48px;
  background: linear-gradient(#e3e3e3, #d6d6d6);
  font-size: 24px;
  color: #5c5c5c;
`;

const StatusItem = styled(PlainButton)`
  gap: 4px;
  margin-left: 36px;
  color: #5c5c5c;
`;

const ViewButton = styled(PlainButton)<{ $active?: boolean }>`
  width: 72px;
  height: 44px;
  background: ${(p) => (p.$active ? "#a5a5a5" : "none")};
`;

const Views = styled.div`
  display: flex;
  margin: 0 16px 0 auto;
`;

const Zoom = styled.input`
  appearance: none;
  width: 200px;
  height: 8px;
  border-radius: 4px;
  background: #9a9a9a;
  &::-webkit-slider-thumb {
    appearance: none;
    width: 32px;
    height: 32px;
    border-radius: 50%;
    background: #fff;
    box-shadow: 0 1px 3px rgba(0, 0, 0, 0.45);
  }
`;

const Percent = styled.span`
  margin-left: 34px;
`;

const TABS = ["Home", "Insert", "Draw", "Page Layout", "Formulas", "Data", "Review", "View", "Developer", "Acrobat"];

export default function App() {
  return (
    <Page>
      <Global />

      <TitleBar>
        <QuickAccess>
          <AutoSave>
            AutoSave
            <Toggle>
              <input type="checkbox" role="switch" />
              <span>OFF</span>
            </Toggle>
          </AutoSave>
          <BarIcon aria-label="Home"><HomeIcon /></BarIcon>
          <BarIcon aria-label="Save"><SaveIcon /></BarIcon>
          <BarIcon aria-label="Save as"><SaveEditIcon /></BarIcon>
          <Row $gap={12}>
            <BarIcon aria-label="Undo"><UndoIcon /></BarIcon>
            <BarIcon $w={16} aria-label="Undo history"><Chevron color="#7fab88" /></BarIcon>
          </Row>
          <BarIcon aria-label="Redo"><RedoIcon /></BarIcon>
          <Row $gap={12}>
            <BarIcon aria-label="Document info"><DocInfoIcon /></BarIcon>
            <BarIcon $w={16} aria-label="Document info menu"><Chevron color="#fff" /></BarIcon>
          </Row>
          <BarIcon $w={26} aria-label="More"><DotsIcon /></BarIcon>
        </QuickAccess>
        <DocTitle>
          <WorkbookIcon />
          CYB 250 CIS Controls Worksheet
          <Chevron color="#fff" />
        </DocTitle>
        <TitleActions>
          <BarIcon aria-label="Search"><SearchIcon /></BarIcon>
          <BarIcon aria-label="Presence"><PeopleIcon /></BarIcon>
        </TitleActions>
      </TitleBar>

      <Ribbon>
        <TabStrip>
          {TABS.map((t, i) => (
            <RibbonTab key={t} $active={i === 0}>{t}</RibbonTab>
          ))}
          <TellMe><BulbIcon />Tell me</TellMe>
          <TabActions>
            <ActionButton><CommentIcon />Comments</ActionButton>
            <ActionButton><ShareIcon />Share</ActionButton>
          </TabActions>
        </TabStrip>

        <Toolbar>
          <Group $pl={24} $pr={22} $gap={16}>
            <Big>
              <BigIcon><PasteIcon /><Chevron /></BigIcon>
              Paste
            </Big>
            <ThreeRows>
              <Small aria-label="Cut"><CutIcon /></Small>
              <Small aria-label="Copy"><CopyIcon /><Chevron /></Small>
              <Small aria-label="Format painter"><PainterIcon /></Small>
            </ThreeRows>
          </Group>
          <Rule />

          <Group $pl={20} $pr={20}>
            <TwoRows>
              <Row $gap={5}>
                <SelectBox $w={281}>
                  <select aria-label="Font"><option>Arial</option></select>
                  <Chevron />
                </SelectBox>
                <SelectBox $w={107}>
                  <select aria-label="Font size"><option>10</option></select>
                  <Chevron />
                </SelectBox>
                <Tool $w={48} aria-label="Increase font size"><SizeIcon /></Tool>
                <Tool $w={48} aria-label="Decrease font size"><SizeIcon down /></Tool>
              </Row>
              <Row>
                <Tool $w={48} aria-label="Bold"><Mark $kind="b">B</Mark></Tool>
                <Tool aria-label="Italic"><Mark $kind="i">I</Mark></Tool>
                <Tool aria-label="Underline"><Mark $kind="u">U</Mark></Tool>
                <Tool $w={24} aria-label="Underline styles"><Chevron /></Tool>
                <MiniRule />
                <Tool $w={48} aria-label="Borders"><BordersIcon /></Tool>
                <Tool $w={24} aria-label="Border styles"><Chevron /></Tool>
                <MiniRule />
                <Tool aria-label="Fill colour"><FillIcon /></Tool>
                <Tool $w={24} aria-label="Fill colours"><Chevron /></Tool>
                <Tool aria-label="Font colour"><FontColorIcon /></Tool>
                <Tool $w={24} aria-label="Font colours"><Chevron /></Tool>
              </Row>
            </TwoRows>
          </Group>
          <Rule />

          <Group $pr={16}>
            <TwoRows>
              <Row>
                <Tool aria-label="Align top"><Bars rows={three} top={0} /></Tool>
                <Tool aria-label="Align middle"><Bars rows={three} top={6} /></Tool>
                <Tool aria-label="Align bottom" $bg="linear-gradient(#bebebe, #c8c8c8)" $radius="6px">
                  <Bars rows={three} top={14} />
                </Tool>
                <MiniRule />
                <Tool $w={48} aria-label="Orientation"><OrientIcon /></Tool>
                <Tool $w={24} aria-label="Orientations"><Chevron /></Tool>
              </Row>
              <Row>
                <Tool aria-label="Align left"><Bars rows={[[0, 28], [0, 20], [0, 28], [0, 20]]} top={4} /></Tool>
                <Tool aria-label="Centre"><Bars rows={[[0, 28], [4, 20], [0, 28], [4, 20]]} top={4} /></Tool>
                <Tool aria-label="Align right"><Bars rows={[[0, 28], [8, 20], [0, 28], [8, 20]]} top={4} /></Tool>
                <MiniRule />
                <Tool $w={48} aria-label="Decrease indent"><IndentIcon /></Tool>
                <Tool aria-label="Increase indent"><IndentIcon inward /></Tool>
              </Row>
            </TwoRows>
          </Group>
          <Rule />

          <Group $pl={16} $pr={20}>
            <TwoRows>
              <Row>
                <Tool $w={48} aria-label="Wrap text" $bg="linear-gradient(#bebebe, #c8c8c8)" $radius="6px 0 0 6px">
                  <WrapIcon />
                </Tool>
                <Tool $w={24} aria-label="Wrap options" $bg="#e0e0e0" $radius="0 6px 6px 0"><Chevron /></Tool>
              </Row>
              <Row>
                <Tool $w={48} aria-label="Merge cells"><MergeIcon /></Tool>
                <Tool $w={24} aria-label="Merge options"><Chevron /></Tool>
              </Row>
            </TwoRows>
          </Group>
          <Rule />

          <Group $pl={20} $pr={18}>
            <TwoRows>
              <SelectBox $w={310}>
                <select aria-label="Number format"><option>General</option></select>
                <Chevron />
              </SelectBox>
              <Row>
                <Tool $w={48} aria-label="Currency"><Mark $kind="sym">$</Mark></Tool>
                <Tool $w={24} aria-label="Currencies"><Chevron /></Tool>
                <Tool aria-label="Percent"><Mark $kind="sym">%</Mark></Tool>
                <Tool aria-label="Comma style">
                  <svg width="16" height="26" viewBox="0 0 16 26" fill={INK}>
                    <path d="M7 0q8 0 8 9 0 12-13 17l-1-2q7-4 7-9-7 0-7-7 0-8 6-8z" />
                  </svg>
                </Tool>
                <MiniRule />
                <Tool aria-label="Increase decimals"><DecimalIcon more /></Tool>
                <Tool aria-label="Decrease decimals"><DecimalIcon /></Tool>
              </Row>
            </TwoRows>
          </Group>
          <Rule />

          <Group $pl={24} $pr={24}>
            <Big><BigIcon><ConditionalIcon /><Chevron /></BigIcon>{"Conditional\nFormatting"}</Big>
            <Big><BigIcon><FormatTableIcon /><Chevron /></BigIcon>{"Format\nas Table"}</Big>
            <Big><BigIcon><CellStylesIcon /><Chevron /></BigIcon>{"Cell\nStyles"}</Big>
          </Group>
          <Rule />

          <Group $pl={24} $pr={28}>
            <ThreeRows>
              <Small><InsertIcon />Insert<Chevron /></Small>
              <Small><DeleteIcon />Delete<Chevron /></Small>
              <Small><FormatIcon />Format<Chevron /></Small>
            </ThreeRows>
          </Group>
          <Rule />

          <Group $pl={24} $pr={24} $gap={15}>
            <ThreeRows>
              <Small aria-label="AutoSum"><SumIcon /><Chevron /></Small>
              <Small aria-label="Fill"><FillDownIcon /><Chevron /></Small>
              <Small aria-label="Clear"><ClearIcon /><Chevron /></Small>
            </ThreeRows>
            <Big $w={84}><BigIcon $gap={12}><SortIcon /><Chevron /></BigIcon>{"Sort &\nFilter"}</Big>
            <Big $w={84}><BigIcon $gap={12}><FindIcon /><Chevron /></BigIcon>{"Find &\nSelect"}</Big>
          </Group>
          <Rule />

          <Group $pl={20} $pr={20}>
            <Big><BigIcon><AnalyzeIcon /></BigIcon>{"Analyze\nData"}</Big>
          </Group>
          <Rule />

          <Group $pl={24} $pr={24}>
            <Big><BigIcon><PdfIcon /></BigIcon>{"Create and Share\nAdobe PDF"}</Big>
          </Group>
        </Toolbar>
      </Ribbon>

      <FormulaBar>
        <NameBox>
          <input aria-label="Name box" defaultValue="B3" />
          <Stepper>
            <PlainButton aria-label="Previous name"><Triangle up /></PlainButton>
            <PlainButton aria-label="Next name"><Triangle /></PlainButton>
          </Stepper>
        </NameBox>
        <FormulaActions>
          <PlainButton aria-label="Cancel">
            <svg width="22" height="22" viewBox="0 0 22 22" stroke="#cdcdcd" strokeWidth="4"><path d="M2 2l18 18M20 2L2 20" /></svg>
          </PlainButton>
          <PlainButton aria-label="Enter">
            <svg width="28" height="22" viewBox="0 0 28 22" stroke="#cdcdcd" strokeWidth="4" fill="none"><path d="M2 12l8 7L26 2" /></svg>
          </PlainButton>
          <PlainButton aria-label="Insert function"><Fx>fx</Fx></PlainButton>
        </FormulaActions>
        <FormulaInput aria-label="Formula" defaultValue="Maintain an Inventory of Sensitive Information" />
        <Expand aria-label="Expand formula bar"><Triangle /></Expand>
      </FormulaBar>

      <Sheet />

      <SheetTabs>
        <TabArrows>
          <PlainButton aria-label="Previous sheet">
            <svg width="15" height="20" viewBox="0 0 15 20" fill="#555"><path d="M15 0v20L0 10z" /></svg>
          </PlainButton>
          <PlainButton aria-label="Next sheet">
            <svg width="15" height="20" viewBox="0 0 15 20" fill="#b4b4b4"><path d="M0 0v20l15-10z" /></svg>
          </PlainButton>
        </TabArrows>
        <SheetTab><Faded>C</Faded>IS Control 12 Boundary Defense</SheetTab>
        <SheetTab $active>CIS Control 13 Data Protection</SheetTab>
        <SheetTab>CIS Control 14 Controlled Acces</SheetTab>
        <SheetTab>CIS Control 16 Account Monitori</SheetTab>
        <AddTab aria-label="Add sheet">
          <svg width="20" height="20" viewBox="0 0 20 20" stroke="#5e5e5e" strokeWidth="3"><path d="M10 0v20M0 10h20" /></svg>
        </AddTab>
      </SheetTabs>

      <StatusBar>
        <span>Ready</span>
        <StatusItem aria-label="Macros">
          <svg width="32" height="32" viewBox="0 0 32 32" fill="none" stroke="#666" strokeWidth="3">
            <path d="M12 3h15v2h4M26 4v22q0 3-3 3H6q-4 0-4-5h17v5M7 12v12" />
            <circle cx="6" cy="6" r="5" fill="#666" stroke="none" />
          </svg>
        </StatusItem>
        <StatusItem>
          <svg width="32" height="32" viewBox="0 0 32 32" fill="none" stroke="#666" strokeWidth="2">
            <circle cx="13" cy="5" r="4" />
            <path d="M9 9L2 6q-2 2 1 4l5 3v7l-3 9q1 3 3 1l4-9M17 9l7-3q2 2-1 4l-5 3v7M14 25l5 5L31 18" />
          </svg>
          Accessibility: Good to go
        </StatusItem>
        <Views>
          <ViewButton $active aria-label="Normal view">
            <svg width="26" height="28" viewBox="0 0 26 28" fill="none" stroke="#fff" strokeWidth="3">
              <path d="M2 2h22v24H2zM9 2v24M17 2v24M2 10h22M2 18h22" />
            </svg>
          </ViewButton>
          <ViewButton aria-label="Page layout view">
            <svg width="28" height="28" viewBox="0 0 28 28" fill="none" stroke="#666" strokeWidth="2">
              <path d="M1 1h26v26H1zM7 5h14v17H7zM10 10h8M10 14h8M10 18h8" />
            </svg>
          </ViewButton>
          <ViewButton aria-label="Page break view">
            <svg width="28" height="28" viewBox="0 0 28 28" fill="none" stroke="#666" strokeWidth="2">
              <path d="M1 1h26v26H1zM1 16h17V1M9 1v15" />
            </svg>
          </ViewButton>
        </Views>
        <Row $gap={14}>
          <PlainButton aria-label="Zoom out">
            <svg width="16" height="16" viewBox="0 0 16 16" stroke="#5e5e5e" strokeWidth="4"><path d="M0 8h16" /></svg>
          </PlainButton>
          <Zoom type="range" aria-label="Zoom" min={0} max={200} defaultValue={100} />
          <PlainButton aria-label="Zoom in">
            <svg width="16" height="16" viewBox="0 0 16 16" stroke="#5e5e5e" strokeWidth="4"><path d="M0 8h16M8 0v16" /></svg>
          </PlainButton>
        </Row>
        <Percent>100%</Percent>
      </StatusBar>
    </Page>
  );
}
